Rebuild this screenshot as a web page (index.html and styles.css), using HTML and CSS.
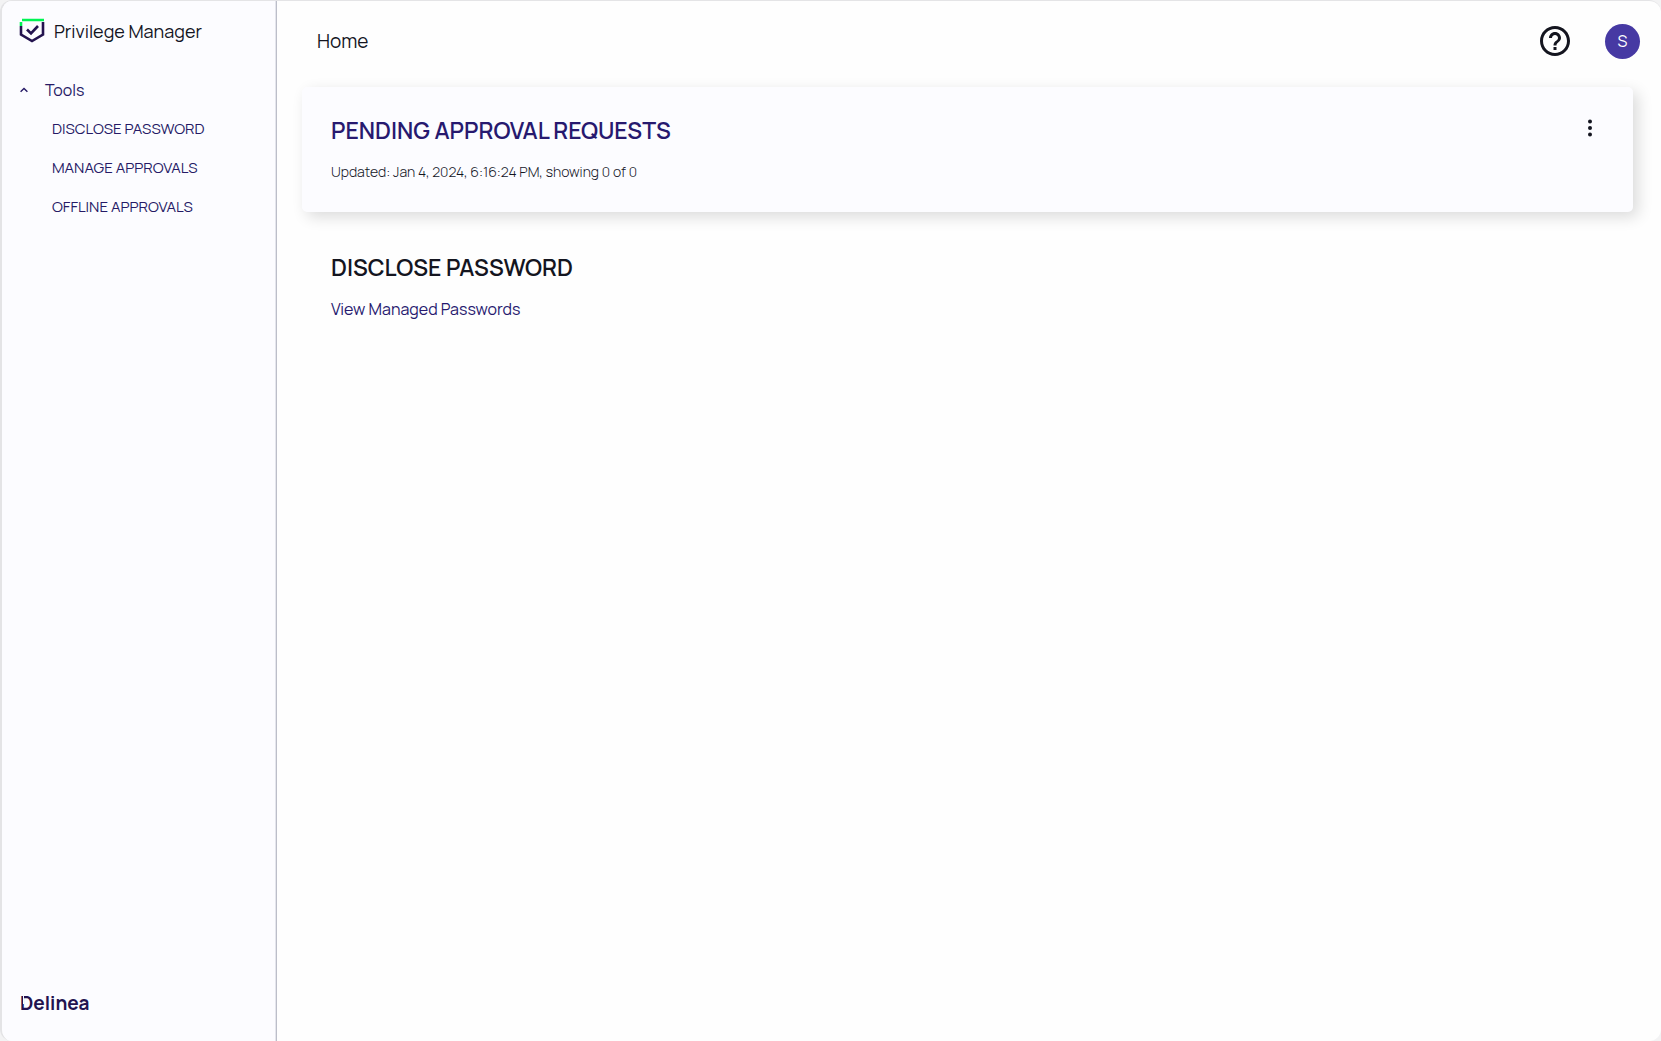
FILE: index.html
```html
<!DOCTYPE html>
<html lang="en">
<head>
<meta charset="utf-8">
<title>Privilege Manager</title>
<link rel="stylesheet" href="styles.css">
</head>
<body>
<div class="app">
  <aside class="sidebar">
    <div class="brand">
      <svg class="brand-icon" viewBox="0 0 26 26" aria-hidden="true">
        <path d="M2 8v8.500l11 6.500 11-6.500V4" fill="none" stroke="#23134f" stroke-width="2.600"/>
        <path d="M2 8V4M3 2h22" fill="none" stroke="#00f553" stroke-width="2.600"/>
        <path d="M8 11.500l4 4 7-7.500" fill="none" stroke="#23134f" stroke-width="2.600"/>
      </svg>
      <span>Privilege Manager</span>
    </div>
    <nav class="nav">
      <button class="nav-group" type="button" aria-expanded="true">
        <svg class="chevron" viewBox="0 0 8 6" aria-hidden="true"><path d="M.6 4.800L4 1.400l3.400 3.400" fill="none" stroke="currentColor" stroke-width="1.400"/></svg>
        <span>Tools</span>
      </button>
      <ul class="nav-list">
        <li><a href="#disclose">DISCLOSE PASSWORD</a></li>
        <li><a href="#manage">MANAGE APPROVALS</a></li>
        <li><a href="#offline">OFFLINE APPROVALS</a></li>
      </ul>
    </nav>
    <div class="vendor">Delinea</div>
  </aside>
  <div class="content">
    <header class="topbar">
      <h1 class="page-title">Home</h1>
      <div class="actions">
        <button class="help" type="button" aria-label="Help">
          <svg viewBox="2 2 20 20" aria-hidden="true"><path fill="currentColor" d="M11 18h2v-2h-2v2zm1-16C6.480 2 2 6.480 2 12s4.480 10 10 10 10-4.480 10-10S17.520 2 12 2zm0 18c-4.410 0-8-3.590-8-8s3.590-8 8-8 8 3.590 8 8-3.590 8-8 8zm0-14c-2.210 0-4 1.790-4 4h2c0-1.100.9-2 2-2s2 .9 2 2c0 2-3 1.750-3 5h2c0-2.250 3-2.500 3-5 0-2.210-1.790-4-4-4z"/></svg>
        </button>
        <button class="avatar" type="button">S</button>
      </div>
    </header>
    <main class="main">
      <section class="card">
        <div class="card-text">
          <h2 class="heading heading-accent">PENDING APPROVAL REQUESTS</h2>
          <p class="meta">Updated: Jan 4, 2024, 6:16:24 PM, showing 0 of 0</p>
        </div>
        <button class="more" type="button" aria-label="More options">
          <svg viewBox="0 0 4 18" aria-hidden="true"><g fill="currentColor"><circle cx="2" cy="2.500" r="2"/><circle cx="2" cy="9" r="2"/><circle cx="2" cy="15.500" r="2"/></g></svg>
        </button>
      </section>
      <section class="block" id="disclose">
        <h2 class="heading">DISCLOSE PASSWORD</h2>
        <a class="link" href="#passwords">View Managed Passwords</a>
      </section>
    </main>
  </div>
</div>
</body>
</html>
```
FILE: styles.css
```css
* { box-sizing: border-box; }
body {
  margin: 0;
  background: #f3f3f4;
  color: #14151f;
  font-family: Manrope, Inter, sans-serif;
}
h1, h2, p, ul { margin: 0; padding: 0; }
button { padding: 0; border: 0; background: none; color: inherit; font: inherit; cursor: pointer; }
a { text-decoration: none; }
svg { display: block; }

.app {
  display: flex;
  min-height: 100vh;
  border: 1px solid #e4e4e6;
  border-width: 1px 0 0 2px;
  border-radius: 12px;
  background: #fefefe;
  overflow: hidden;
}
.sidebar {
  display: flex;
  flex-direction: column;
  flex: 0 0 275px;
  border-right: 1px solid #bcbec9;
  box-shadow: inset -1px 0 #e4e5ec;
  background: #fcfcff;
  color: #261a66;
}
.brand {
  display: flex;
  align-items: center;
  gap: 9px;
  padding: 16px 17px 0;
  color: #14151f;
  font-size: 18px;
  line-height: 28px;
}
.brand-icon { width: 26px; height: 26px; }
.nav { flex: 1; padding: 32px 16px 0; }
.nav-group {
  display: flex;
  align-items: center;
  gap: 17px;
  height: 26px;
  font-size: 16px;
}
.chevron { width: 8px; height: 6px; margin-left: 2px; }
.nav-list {
  padding: 6px 0 0 34px;
  list-style: none;
  font-size: 15px;
  line-height: 39px;
}
.nav-list a { color: inherit; }
.vendor {
  position: relative;
  padding: 0 18px 24px;
  color: #23134f;
  font-size: 19px;
  font-weight: 700;
  line-height: 28px;
}
/* Notch between the stem and the bowl of the wordmark's D */
.vendor::after {
  content: "";
  position: absolute;
  top: 6px;
  left: 21px;
  width: 1px;
  height: 9px;
  background: #fcfcff;
}
.content { flex: 1; min-width: 0; }
.topbar {
  display: flex;
  align-items: center;
  justify-content: space-between;
  height: 80px;
  padding: 0 21px 0 40px;
}
.page-title { font-size: 19px; font-weight: 400; line-height: 24px; }
.actions { display: flex; align-items: center; gap: 35px; }
.help svg { width: 30px; height: 30px; }
.avatar {
  width: 35px;
  height: 35px;
  border-radius: 50%;
  background: #4639a3;
  color: #fff;
  font-size: 16px;
}
.main { padding: 6px 28px 28px 25px; }
.card {
  display: flex;
  align-items: flex-start;
  justify-content: space-between;
  padding: 28px 41px 28px 29px;
  border-radius: 5px;
  background: #fcfcff;
  box-shadow: 5px 5px 15px rgba(0, 0, 0, .14);
}
.heading { font-size: 23px; font-weight: 600; line-height: 30px; }
.heading-accent { color: #27196f; }
.meta { margin-top: 15px; font-size: 14px; font-weight: 300; line-height: 24px; }
.more { padding: 4px 0; }
.more svg { width: 4px; height: 18px; }
.block { padding: 40px 29px; }
.link {
  display: inline-block;
  margin-top: 15px;
  color: #27196f;
  font-size: 16px;
  line-height: 24px;
}
```
